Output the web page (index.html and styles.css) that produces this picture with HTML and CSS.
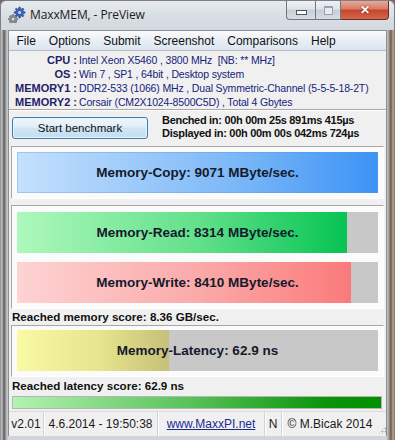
FILE: index.html
```html
<!DOCTYPE html>
<html>
<head>
    <meta charset="UTF-8">
    <title>MaxxMEM, - PreView</title>
    <link rel="stylesheet" href="styles.css">
</head>
<body>
<div class="window">
    <header class="titlebar">
        <svg class="app-icon" width="18" height="18" viewBox="0 0 18 18">
            <g fill="#3d63b8" stroke="#1f3f86" stroke-width="0.6">
                <path d="M11 2 l1.2 0 .3 1.6 1.2.5 1.3-.9.9.9-.9 1.3.5 1.2 1.6.3 0 1.2-1.6.3-.5 1.2.9 1.3-.9.9-1.3-.9-1.2.5-.3 1.6-1.2 0-.3-1.6-1.2-.5-1.3.9-.9-.9.9-1.3-.5-1.2-1.6-.3 0-1.2 1.6-.3.5-1.2-.9-1.3.9-.9 1.3.9 1.2-.5z"/>
            </g>
            <circle cx="11.6" cy="7.6" r="1.5" fill="#c9d6f2"/>
            <g fill="#8c8c8c" stroke="#505050" stroke-width="0.5">
                <path d="M4.5 9.5 h1.2 l.3 1.1 1 .4 1-.6.8.8-.6 1 .4 1 1.1.3 v1.2 l-1.1.3-.4 1 .6 1-.8.8-1-.6-1 .4-.3 1.1 h-1.2 l-.3-1.1-1-.4-1 .6-.8-.8.6-1-.4-1-1.1-.3 v-1.2 l1.1-.3.4-1-.6-1 .8-.8 1 .6 1-.4z"/>
            </g>
            <circle cx="5.1" cy="14.1" r="1.2" fill="#eee"/>
        </svg>
        <span class="title">MaxxMEM, - PreView</span>
        <div class="controls">
            <span class="ctl ctl-min"><i class="min-glyph"></i></span>
            <span class="ctl ctl-max"><i class="max-glyph"></i></span>
            <span class="ctl ctl-close">&#x2715;</span>
        </div>
    </header>

    <div class="frame">
        <div class="client">
            <nav class="menubar">
                <span>File</span>
                <span>Options</span>
                <span>Submit</span>
                <span>Screenshot</span>
                <span>Comparisons</span>
                <span>Help</span>
            </nav>

            <section class="form">
                <div class="info">
                    <b>CPU :</b><span>Intel Xeon X5460 , 3800 MHz &nbsp;[NB: ** MHz]</span>
                    <b>OS :</b><span>Win 7 , SP1 , 64bit , Desktop system</span>
                    <b>MEMORY1 :</b><span>DDR2-533 (1066) MHz , Dual Symmetric-Channel (5-5-5-18-2T)</span>
                    <b>MEMORY2 :</b><span>Corsair (CM2X1024-8500C5D) , Total 4 Gbytes</span>
                </div>
                <hr class="sep">

                <div class="bench-row">
                    <button class="btn">Start benchmark</button>
                    <div class="times">
                        <div>Benched in: 00h 00m 25s 891ms 415µs</div>
                        <div>Displayed in: 00h 00m 00s 042ms 724µs</div>
                    </div>
                </div>

                <div class="panel">
                    <div class="track">
                        <div class="fill fill-copy" style="width: 100%"></div>
                        <div class="label">Memory-Copy: 9071 MByte/sec.</div>
                    </div>
                </div>

                <div class="panel panel-double">
                    <div class="track">
                        <div class="fill fill-read" style="width: 91.4%"></div>
                        <div class="label">Memory-Read: 8314 MByte/sec.</div>
                    </div>
                    <div class="track">
                        <div class="fill fill-write" style="width: 92.5%"></div>
                        <div class="label">Memory-Write: 8410 MByte/sec.</div>
                    </div>
                </div>

                <div class="score">Reached memory score: 8.36 GB/sec.</div>

                <div class="panel panel-latency">
                    <div class="track">
                        <div class="fill fill-latency" style="width: 42.1%"></div>
                        <div class="label">Memory-Latency: 62.9 ns</div>
                    </div>
                </div>

                <div class="score">Reached latency score: 62.9 ns</div>

                <div class="progress"><div class="progress-fill"></div></div>
            </section>

            <footer class="statusbar">
                <span class="cell">v2.01</span>
                <span class="cell">4.6.2014 - 19:50:38</span>
                <span class="cell"><a href="#">www.MaxxPI.net</a></span>
                <span class="cell">N</span>
                <span class="cell">© M.Bicak 2014</span>
                <span class="grip"></span>
            </footer>
        </div>
    </div>
</div>
</body>
</html>
```

FILE: styles.css
```css
html, body {
    margin: 0;
    padding: 0;
    background: #6f6a66;
}

body {
    font-family: "Liberation Sans", Arial, sans-serif;
}

.window {
    width: 395px;
    height: 440px;
    display: flex;
    flex-direction: column;
    box-sizing: border-box;
    border-radius: 6px 6px 0 0;
    overflow: hidden;
    background: linear-gradient(90deg, #8d8d8d 0, #c2c2c2 2px, #595959 4px, #a9a9a9 6px, #cfd5dc 8px, #cfd5dc 386px, #b9b2aa 388px, #6b5a4c 391px, #b6a89a 393px, #7d7066 395px);
}

/* title bar ------------------------------------------------------- */

.titlebar {
    height: 30px;
    flex: none;
    display: flex;
    align-items: flex-start;
    background: linear-gradient(180deg, #e6eaee 0, #d7dde3 60%, #d3d9df 100%);
    border: 1px solid #7c8085;
    border-bottom: none;
    border-radius: 6px 6px 0 0;
    box-sizing: border-box;
}

.app-icon {
    margin: 4px 0 0 7px;
}

.title {
    margin: 5px 0 0 4px;
    font-family: "Open Sans", "Liberation Sans", sans-serif;
    font-size: 12px;
    color: #1b1b1b;
    letter-spacing: -0.1px;
}

.controls {
    margin-left: auto;
    margin-right: 5px;
    display: flex;
}

.ctl {
    height: 19px;
    box-sizing: border-box;
    display: flex;
    align-items: center;
    justify-content: center;
    border: 1px solid #6e7884;
    border-top: none;
}

.ctl-min {
    width: 30px;
    border-radius: 0 0 0 4px;
    background: linear-gradient(180deg, #eef1f4 0, #dfe4e9 45%, #c6ced6 50%, #d7dde3 100%);
}

.ctl-max {
    width: 25px;
    border-left: none;
    background: linear-gradient(180deg, #eef1f4 0, #dfe4e9 45%, #c6ced6 50%, #d7dde3 100%);
}

.ctl-close {
    width: 48px;
    border-left: none;
    border-color: #6e2a20;
    border-radius: 0 0 4px 0;
    background: linear-gradient(180deg, #e9a99b 0, #d77b66 45%, #c4452c 50%, #d5674d 100%);
    color: #fff;
    font-size: 12px;
    font-weight: bold;
    text-shadow: 0 0 2px #6a1a10;
}

.min-glyph {
    width: 9px;
    height: 3px;
    background: #fff;
    border: 1px solid #4e5660;
    margin-top: 5px;
}

.max-glyph {
    width: 7px;
    height: 6px;
    border: 1px solid #9aa3ad;
    border-top-width: 2px;
    background: #e9ecef;
}

/* frame and client ------------------------------------------------ */

.frame {
    flex: 1;
    display: flex;
    padding: 0 8px 4px 8px;
    min-width: 0;
}

.client {
    flex: 1;
    min-width: 0;
    overflow: hidden;
    display: flex;
    flex-direction: column;
    background: #f0f0f0;
    border: 1px solid #8b9097;
    border-bottom: none;
    box-sizing: border-box;
}

.menubar {
    height: 19px;
    flex: none;
    display: flex;
    align-items: center;
    padding-left: 1px;
    background: linear-gradient(180deg, #fbfcfd 0, #e9eef5 50%, #dce5ef 100%);
    border-bottom: 1px solid #b6bcc6;
    font-size: 12px;
    color: #111;
}

.menubar span {
    padding: 0 6.5px;
}

/* form ------------------------------------------------------------ */

.form {
    flex: 1;
    padding-top: 2px;
}

.info {
    display: grid;
    grid-template-columns: 67px auto;
    column-gap: 2px;
    font-size: 11px;
    line-height: 14px;
    padding-left: 1px;
    white-space: nowrap;
}

.info b {
    text-align: right;
    color: #1f2266;
}

.info span {
    color: #16237a;
    font-size: 10.5px;
    letter-spacing: -0.15px;
}

.sep {
    margin: 0;
    height: 0;
    border: none;
    border-top: 1px solid #a8a8a8;
    border-bottom: 1px solid #fff;
}

.bench-row {
    display: flex;
    align-items: flex-start;
    height: 32px;
    margin-top: 3px;
}

.btn {
    width: 136px;
    height: 22px;
    margin: 3px 0 0 3px;
    border: 1px solid #3c7fb1;
    border-radius: 3px;
    background: linear-gradient(180deg, #f0f7fc 0, #e0eef8 45%, #cfe5f3 50%, #c4def0 100%);
    font-family: "Liberation Sans", Arial, sans-serif;
    font-size: 11.5px;
    color: #111;
    box-shadow: inset 0 0 0 1px #e8f4fc;
}

.times {
    margin-left: 14px;
    font-size: 11px;
    font-weight: bold;
    line-height: 13px;
    letter-spacing: -0.3px;
    color: #111;
    white-space: nowrap;
}

.panel {
    margin: 0 2px 0 2px;
    padding: 5px;
    background: #fbfbfb;
    border: 1px solid;
    border-color: #a7a7a7 #fff #fff #a7a7a7;
}

.panel + .panel {
    margin-top: 6px;
}

.panel-double {
    display: flex;
    flex-direction: column;
    gap: 9px;
    padding-top: 6px;
}

.panel-latency {
    padding-top: 4px;
}

.track {
    display: grid;
    height: 41px;
    background: #c8c8c8;
}

.fill,
.label {
    grid-area: 1 / 1;
}

.fill {
    height: 100%;
}

.label {
    align-self: center;
    text-align: center;
    font-size: 13.5px;
    font-weight: bold;
    color: #141a2c;
}

.fill-copy {
    background: linear-gradient(90deg, #c4e0fd 0, #7db8f7 60%, #3b93f6 100%);
    box-shadow: inset 0 0 0 1px rgba(90, 150, 220, 0.35);
}

.fill-read {
    background: linear-gradient(90deg, #aef8bd 0, #62e08a 55%, #06c453 100%);
}

.fill-write {
    background: linear-gradient(90deg, #fdd3d3 0, #fba9a9 55%, #fb7a7a 100%);
}

.fill-latency {
    background: linear-gradient(90deg, #fafaa4 0, #e6e48c 55%, #c7c07a 100%);
}

.score {
    margin: 1px 0 0 3px;
    font-size: 11.6px;
    font-weight: bold;
    line-height: 13px;
    height: 15px;
    color: #111;
}

.panel-latency + .score {
    margin-top: 2px;
}

.score + .progress {
    margin-top: 2px;
}

.progress {
    height: 13px;
    margin: 0 4px 0 3px;
    border: 1px solid #b5b5b5;
    background: #e6e6e6;
    box-sizing: border-box;
}

.progress-fill {
    height: 100%;
    background: linear-gradient(90deg, #b2f3b2 0, #55c055 50%, #0a940a 85%, #009000 100%);
}

/* status bar ------------------------------------------------------ */

.statusbar {
    height: 24px;
    flex: none;
    display: grid;
    grid-template-columns: 35px 114px 107px 17px 96px 1fr;
    align-items: stretch;
    border-top: 1px solid #d8d8d8;
    font-size: 12px;
    color: #1a1a1a;
}

.cell {
    display: flex;
    align-items: center;
    justify-content: center;
    border-right: 1px solid #d2d2d2;
    box-shadow: 1px 0 0 #fff;
}

.cell:nth-child(5) {
    border-right: none;
    box-shadow: none;
}

.cell a {
    color: #1a2a90;
    text-decoration: underline;
}

.grip {
    align-self: end;
    justify-self: end;
    width: 10px;
    height: 10px;
    margin: 0 2px 2px 0;
    background:
        radial-gradient(circle, #a8a8a8 0.8px, transparent 1.2px) 0 0 / 3px 3px;
    clip-path: polygon(100% 0, 100% 100%, 0 100%);
}
```
